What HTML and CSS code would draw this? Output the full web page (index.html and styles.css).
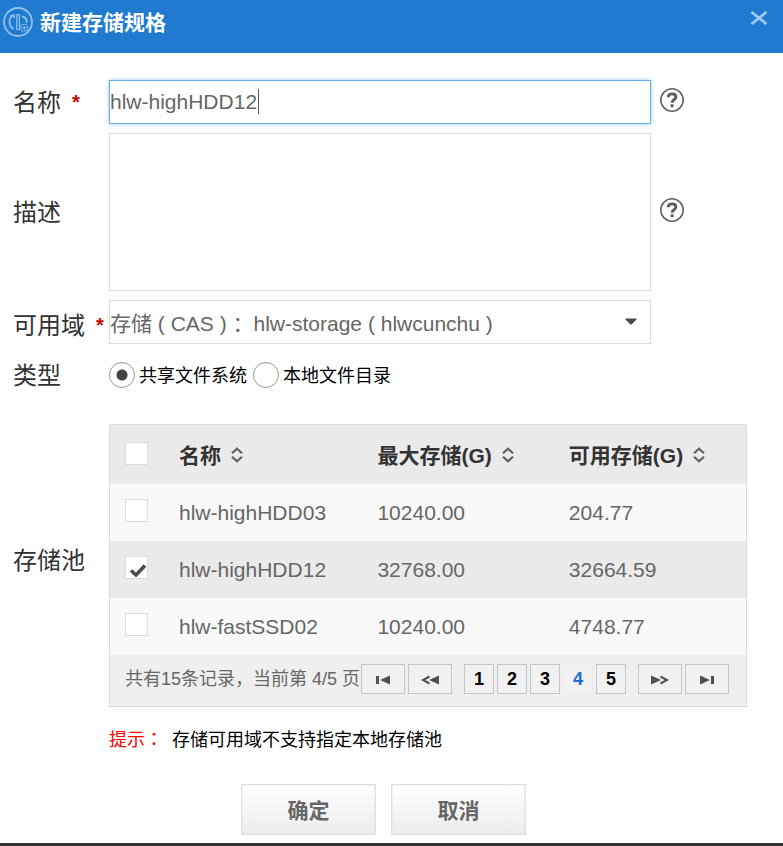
FILE: index.html
```html
<!DOCTYPE html>
<html lang="zh-CN">
<head>
<meta charset="utf-8">
<title>新建存储规格</title>
<link rel="stylesheet" href="styles.css">
</head>
<body>
<svg class="defs" aria-hidden="true">
  <symbol id="sort" viewBox="0 0 12 16"><path d="M1 6.300 6 1.800l5 4.500M1 9.700l5 4.500 5-4.500" fill="none" stroke="#606060" stroke-width="2.200"/></symbol>
  <symbol id="help" viewBox="0 0 24 24"><circle cx="12" cy="12" r="11.200" fill="#fff" stroke="#666" stroke-width="1.600"/><path d="M8.200 9.300C8.300 7 9.700 5.900 12 5.900s3.900 1.100 3.900 3c0 1.500-.9 2.200-1.900 2.900-1.200.8-1.800 1.300-1.800 2.900" fill="none" stroke="#5c5c5c" stroke-width="2.900"/><path d="M10.600 16.300h3v2.900h-3z" fill="#5c5c5c"/></symbol>
</svg>
<main class="dialog">
  <header class="titlebar">
    <svg class="logo" viewBox="0 0 30 30" aria-hidden="true">
      <g fill="none" stroke="#8fc0ee">
        <circle cx="15" cy="15" r="14" stroke-width="1.800"/>
        <path d="M10.500 8.500C5.500 10 5 18.500 10.500 22M7 9.200l3.800-1 .6 2.800M19 9.500c3.500.5 5 3 4.700 6.500" stroke-width="1.800"/>
        <path d="M13.800 7.500h2.600v15h-2.600z" stroke-width="1.200"/>
        <rect x="18" y="17.500" width="6.500" height="6.500" rx="1.500" stroke-width="1.200" stroke-dasharray="2 .8"/>
        <path d="M19.200 20.800h4M21.200 18.800v4"/>
      </g>
    </svg>
    <h1>新建存储规格</h1>
    <button class="close" type="button" aria-label="关闭"><svg viewBox="0 0 18 14"><path d="M1.500 1 16.500 13M16.500 1 1.500 13" stroke="#9dcbf7" stroke-width="2.800"/></svg></button>
  </header>
  <form class="form">
    <label class="label" for="name">名称<span class="star">*</span></label>
    <div class="field">
      <div class="control"><input class="box active" id="name" type="text" value="hlw-highHDD12"><span class="caret"></span></div>
      <svg class="help"><use href="#help"/></svg>
    </div>

    <label class="label" for="desc">描述</label>
    <div class="field">
      <textarea class="box area" id="desc"></textarea>
      <svg class="help"><use href="#help"/></svg>
    </div>

    <label class="label zone-label" for="zone">可用域<span class="star">*</span></label>
    <div class="field no-help">
      <div class="control">
        <select class="box" id="zone"><option>存储 ( CAS ) ：hlw-storage ( hlwcunchu )</option></select>
        <svg class="arrow" viewBox="0 0 12 7" aria-hidden="true"><path d="M.5.5h11v1L6.500 6.500h-1L.5 1.500z" fill="#4a4a4a"/></svg>
      </div>
    </div>

    <span class="label" id="type">类型</span>
    <div class="radios" role="radiogroup" aria-labelledby="type">
      <label><input type="radio" name="type" checked><span>共享文件系统</span></label>
      <label><input type="radio" name="type"><span>本地文件目录</span></label>
    </div>

    <span class="label pool-label">存储池</span>
    <div class="pool">
      <table>
        <colgroup><col class="c-check"><col class="c-name"><col class="c-max"><col></colgroup>
        <thead>
          <tr><th><input type="checkbox" aria-label="全选"></th><th>名称<svg class="sort"><use href="#sort"/></svg></th><th>最大存储(G)<svg class="sort"><use href="#sort"/></svg></th><th>可用存储(G)<svg class="sort"><use href="#sort"/></svg></th></tr>
        </thead>
        <tbody>
          <tr><td><input type="checkbox" aria-label="hlw-highHDD03"></td><td>hlw-highHDD03</td><td>10240.00</td><td>204.77</td></tr>
          <tr class="selected"><td><span class="check"><input type="checkbox" aria-label="hlw-highHDD12" checked><svg class="tick" viewBox="0 0 18 14" aria-hidden="true"><path d="M2 7.500 7 12 16 2.500" fill="none" stroke="#4a4a4a" stroke-width="3.500"/></svg></span></td><td>hlw-highHDD12</td><td>32768.00</td><td>32664.59</td></tr>
          <tr><td><input type="checkbox" aria-label="hlw-fastSSD02"></td><td>hlw-fastSSD02</td><td>10240.00</td><td>4748.77</td></tr>
        </tbody>
      </table>
      <div class="pager">
        <span>共有15条记录，当前第 4/5 页</span>
        <div class="group">
          <button class="nav" type="button" aria-label="首页"><svg viewBox="0 0 18 10"><path d="M2 1h3v8H2zM16 .5v9L6 5z"/></svg></button>
          <button class="nav" type="button" aria-label="上一页"><svg viewBox="0 0 18 10"><path d="M18 .5v9L8 5z"/><path class="line" d="M8.500 1.500 2 5l6.500 3.500"/></svg></button>
        </div>
        <div class="group">
          <button type="button">1</button>
          <button type="button">2</button>
          <button type="button">3</button>
          <button class="current" type="button">4</button>
          <button type="button">5</button>
        </div>
        <div class="group">
          <button class="nav" type="button" aria-label="下一页"><svg viewBox="0 0 18 10"><path d="M0 .5v9L10 5z"/><path class="line" d="M9.500 1.500 16 5 9.500 8.500"/></svg></button>
          <button class="nav" type="button" aria-label="末页"><svg viewBox="0 0 18 10"><path d="M2 .5v9L12 5zM13 1h3v8h-3z"/></svg></button>
        </div>
      </div>
    </div>
    <p class="tip"><span class="tip-title">提示<span lang="zh-TW">：</span></span>存储可用域不支持指定本地存储池</p>
  </form>
  <footer class="actions">
    <button type="button">确定</button>
    <button type="button">取消</button>
  </footer>
</main>
</body>
</html>
```
FILE: styles.css
```css
* {
  box-sizing: border-box;
}

body {
  margin: 0;
  background: #fff;
}

body,
button,
input,
select,
textarea {
  font-family: "Liberation Sans", "Noto Sans CJK SC", sans-serif;
}

svg {
  display: block;
}

.defs {
  position: absolute;
  width: 0;
  height: 0;
}

.dialog {
  min-height: 100vh;
  border-bottom: 3px solid #353535;
}

.titlebar {
  display: flex;
  align-items: flex-start;
  height: 53px;
  padding: 7px 15px 0 3px;
  background: #207bd0;
}

.logo {
  width: 30px;
  height: 30px;
}

h1 {
  flex: 1;
  margin: 0 0 0 7px;
  font-size: 21px;
  line-height: 32px;
  color: #fff;
}

.close {
  margin-top: 4px;
  padding: 0;
  border: 0;
  background: none;
}

.close svg {
  width: 18px;
  height: 14px;
}

.form {
  display: grid;
  grid-template-columns: 96px minmax(0, 1fr);
  row-gap: 9px;
  align-items: center;
  padding: 27px 36px 0 13px;
}

.label {
  padding-top: 2px;
  font-size: 24px;
  line-height: 36px;
  color: #333;
  white-space: nowrap;
}

.zone-label {
  padding-top: 8px;
}

.star {
  margin-left: 11px;
  font-size: 20px;
  font-weight: bold;
  color: #c00;
  line-height: 24px;
  vertical-align: 2px;
}

.field {
  display: flex;
  align-items: center;
  gap: 9px;
  padding-right: 63px;
}

.no-help {
  padding-right: 96px;
}

.control {
  position: relative;
  flex: 1;
}

.box {
  display: block;
  width: 100%;
  height: 44px;
  padding: 0;
  border: 1px solid #dcdcdc;
  border-radius: 0;
  outline: 0;
  background: #fff;
  font-size: 21px;
  color: #666;
  appearance: none;
}

select.box {
  padding-top: 2px;
}

.active {
  border-color: #66afe9;
  box-shadow: 0 0 4px #9ccaf2;
}

.caret {
  position: absolute;
  top: 9px;
  left: 149px;
  width: 1px;
  height: 25px;
  background: #555;
}

.area {
  flex: 1;
  height: 158px;
  resize: none;
}

.help {
  width: 24px;
  height: 24px;
  margin-bottom: 5px;
}

.arrow {
  position: absolute;
  top: 18px;
  right: 14px;
  width: 12px;
  height: 7px;
  pointer-events: none;
}

.radios {
  display: flex;
  gap: 6px;
  padding: 9px 0;
}

.radios label {
  display: flex;
  align-items: center;
  gap: 4px;
  font-size: 18px;
  line-height: 26px;
}

.radios span {
  padding-top: 3px;
  line-height: 23px;
}

input[type="radio"] {
  appearance: none;
  width: 26px;
  height: 26px;
  margin: 0;
  border: 1px solid #999;
  border-radius: 50%;
}

input[type="radio"]:checked {
  background: radial-gradient(circle, #444 5px, #fff 6px);
}

.pool-label {
  padding-top: 8px;
}

.pool {
  margin-top: 18px;
  border: 1px solid #dcdcdc;
}

table {
  width: 100%;
  border-collapse: collapse;
  table-layout: fixed;
  font-size: 21px;
  color: #666;
  text-align: left;
}

.c-check {
  width: 54px;
}

.c-name {
  width: 31.2%;
}

.c-max {
  width: 30.1%;
}

th,
td {
  height: 57px;
  padding: 0 0 0 15px;
  line-height: 30px;
  vertical-align: middle;
}

th {
  height: 59px;
  padding-top: 2px;
  color: #333;
}

thead tr,
tbody .selected {
  background: #eaeaea;
}

tbody tr {
  background: #f9f9f9;
}

.sort {
  display: inline-block;
  width: 12px;
  height: 16px;
  margin-left: 10px;
}

input[type="checkbox"] {
  display: block;
  appearance: none;
  width: 23px;
  height: 23px;
  margin: 0 0 4px;
  border: 1px solid #dcdcdc;
  background: #fff;
}

.check {
  display: block;
  position: relative;
}

.tick {
  position: absolute;
  top: 7px;
  left: 4px;
  width: 18px;
  height: 14px;
  pointer-events: none;
}

.pager {
  display: flex;
  align-items: center;
  gap: 12px;
  padding: 9px 0 12px 15px;
  background: #efefef;
  font-size: 18px;
  line-height: 30px;
  color: #666;
  white-space: nowrap;
}

.pager > span {
  margin-right: -11px;
}

.group {
  display: flex;
  gap: 3px;
}

.group button {
  display: grid;
  place-items: center;
  width: 30px;
  height: 30px;
  padding: 0;
  border: 1px solid #c6c6c6;
  background: #f1f1f1;
  font-size: 18px;
  font-weight: bold;
  color: #000;
}

.group .nav {
  width: 44px;
}

.group .current {
  border-color: #ececec;
  color: #1b6dd1;
}

.nav svg {
  width: 18px;
  height: 10px;
  margin-top: 2px;
  fill: #505050;
}

.nav .line {
  fill: none;
  stroke: #505050;
  stroke-width: 2;
}

.tip {
  grid-column: 2;
  margin: 9px 0 0;
  font-size: 18px;
  line-height: 26px;
  color: #000;
}

.tip-title {
  margin-right: 9px;
  color: #f00;
}

.tip-title span {
  font-family: "Noto Sans CJK TC", sans-serif;
}

.actions {
  display: flex;
  justify-content: center;
  gap: 15px;
  padding: 31px 16px 8px 0;
}

.actions button {
  width: 135px;
  height: 51px;
  padding: 0 0 2px;
  border: 1px solid #dfdfdf;
  background: linear-gradient(#fff, #ececec);
  box-shadow: inset 0 0 2px #ddd;
  font-size: 21px;
  font-weight: bold;
  color: #666;
}
```
